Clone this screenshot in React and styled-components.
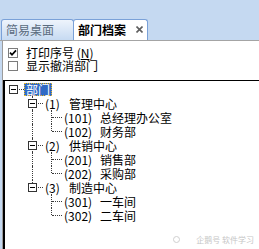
import styled, { createGlobalStyle } from "styled-components";

const GlobalStyle = createGlobalStyle`
  html, body { margin: 0; padding: 0; background: #fff; }
  body {
    font-family: "Noto Sans CJK SC", "Noto Sans", sans-serif;
    font-size: 12px;
    color: #000;
  }
`;

const departments = [
  {
    name: "部门",
    selected: true,
    children: [
      {
        code: "(1)",
        name: "管理中心",
        children: [
          { code: "(101)", name: "总经理办公室" },
          { code: "(102)", name: "财务部" },
        ],
      },
      {
        code: "(2)",
        name: "供销中心",
        children: [
          { code: "(201)", name: "销售部" },
          { code: "(202)", name: "采购部" },
        ],
      },
      {
        code: "(3)",
        name: "制造中心",
        children: [
          { code: "(301)", name: "一车间" },
          { code: "(302)", name: "二车间" },
        ],
      },
    ],
  },
];

// turn the nested tree into rows, keeping which ancestor columns still need a line
const flatten = (nodes, depth = 0, trail = [], out = []) => {
  nodes.forEach((node, i) => {
    const last = i === nodes.length - 1;
    out.push({ ...node, depth, trail, last, first: i === 0 });
    if (node.children) flatten(node.children, depth + 1, [...trail, !last], out);
  });
  return out;
};

const App = () => {
  const rows = flatten(departments);

  return (
    <Window>
      <GlobalStyle />
      <TabBar>
        <Tab>简易桌面</Tab>
        <Tab $active>
          部门档案
          <Close width="7" height="7" viewBox="0 0 7 7">
            <path d="M0.5 0.5 L6.5 6.5 M6.5 0.5 L0.5 6.5" stroke="#5f5f5f" strokeWidth="1.6" />
          </Close>
        </Tab>
      </TabBar>

      <Body>
        <Options>
          <CheckRow>
            <CheckBox>
              <svg width="8" height="8" viewBox="0 0 8 8">
                <path d="M1 3.6 L3 5.8 L7 1.4" fill="none" stroke="#000" strokeWidth="1.7" />
              </svg>
            </CheckBox>
            <span>打印序号 (<u>N</u>)</span>
          </CheckRow>
          <CheckRow>
            <CheckBox />
            <span>显示撤消部门</span>
          </CheckRow>
        </Options>

        <TreePanel>
          {rows.map((row, idx) => (
            <Row key={idx}>
              {row.trail.map((more, k) => (
                <Guide key={k} $line={more} />
              ))}
              <Branch $top={row.depth > 0 || !row.first} $bottom={!row.last}>
                {row.children && <Expander />}
              </Branch>
              <Label $selected={row.selected}>
                {row.code && <Code $chars={row.code.length}>{row.code}</Code>}
                {row.name}
              </Label>
            </Row>
          ))}
        </TreePanel>
      </Body>

      <Watermark>
        <Ring />
        企鹅号 软件学习
      </Watermark>
    </Window>
  );
};

export default App;

const Window = styled.div`
  position: relative;
  width: 259px;
  height: 249px;
  overflow: hidden;
  display: flex;
  flex-direction: column;
  background: #fff;
`;

const TabBar = styled.div`
  flex: none;
  height: 40px;
  display: flex;
  align-items: flex-end;
  padding-left: 1px;
  background: #c5d9f1;
  border-bottom: 1px solid #a4a4a4;
`;

const Tab = styled.div`
  box-sizing: border-box;
  height: 21px;
  width: ${(p) => (p.$active ? 75 : 73)}px;
  margin-left: ${(p) => (p.$active ? -1 : 0)}px;
  padding: 0 0 2px 4px;
  display: flex;
  align-items: center;
  border: 1px solid #7aa1d8;
  border-bottom: none;
  border-radius: 3px 3px 0 0;
  background: ${(p) => (p.$active ? "#fff" : "linear-gradient(#eef4fc, #c6daf2)")};
  color: ${(p) => (p.$active ? "#000" : "#5b6c80")};
  font-weight: ${(p) => (p.$active ? 700 : 400)};
  font-size: 12px;
  white-space: nowrap;
`;

const Close = styled.svg`
  margin-left: 10px;
  flex: none;
`;

const Body = styled.div`
  flex: 1;
  display: flex;
  flex-direction: column;
  border-left: 2px solid #c5d9f1;
  box-shadow: inset 1px 0 #9c9c9c;
`;

const Options = styled.div`
  display: flex;
  flex-direction: column;
  padding: 5px 0 0 6px;
`;

const CheckRow = styled.label`
  height: 13px;
  display: flex;
  align-items: center;
  gap: 8px;
  font-size: 12px;
  line-height: 13px;
  white-space: nowrap;
`;

const CheckBox = styled.span`
  box-sizing: border-box;
  width: 10px;
  height: 10px;
  flex: none;
  display: flex;
  align-items: center;
  justify-content: center;
  border: 1px solid #7c7c7c;
  background: #fff;
`;

const TreePanel = styled.div`
  flex: 1;
  margin: 8px 0 0 1px;
  padding-top: 1px;
  border-top: 1px solid #000;
  border-left: 2px solid #000;
`;

const Row = styled.div`
  height: 14px;
  display: flex;
  align-items: center;
`;

const Guide = styled.span`
  position: relative;
  flex: none;
  width: 19px;
  align-self: stretch;

  &::before {
    content: "";
    display: ${(p) => (p.$line ? "block" : "none")};
    position: absolute;
    left: 8px;
    top: 0;
    bottom: 0;
    border-left: 1px dotted #3a3a3a;
  }
`;

const Branch = styled.span`
  position: relative;
  flex: none;
  width: 19px;
  align-self: stretch;

  &::before {
    content: "";
    display: ${(p) => (p.$top || p.$bottom ? "block" : "none")};
    position: absolute;
    left: 8px;
    top: ${(p) => (p.$top ? "0" : "7px")};
    bottom: ${(p) => (p.$bottom ? "0" : "7px")};
    border-left: 1px dotted #3a3a3a;
  }

  &::after {
    content: "";
    position: absolute;
    left: 9px;
    right: 0;
    top: 7px;
    border-top: 1px dotted #3a3a3a;
  }
`;

const Expander = styled.span`
  position: absolute;
  z-index: 1;
  left: 4px;
  top: 3px;
  box-sizing: border-box;
  width: 9px;
  height: 9px;
  border: 1px solid #333;
  background: #fff;

  &::after {
    content: "";
    position: absolute;
    left: 1px;
    right: 1px;
    top: 3px;
    height: 1px;
    background: #000;
  }
`;

const Label = styled.span`
  box-sizing: border-box;
  height: 13px;
  padding: 0 1px;
  line-height: 11px;
  font-size: 12px;
  white-space: nowrap;
  border: 1px dotted ${(p) => (p.$selected ? "#e9b820" : "transparent")};
  background: ${(p) => (p.$selected ? "#316ac5" : "transparent")};
  color: ${(p) => (p.$selected ? "#fff" : "#000")};
`;

const Code = styled.span`
  display: inline-block;
  width: ${(p) => (p.$chars + 1) * 6}px;
`;

const Watermark = styled.div`
  position: absolute;
  right: 5px;
  bottom: 5px;
  display: flex;
  align-items: center;
  gap: 3px;
  font-size: 8px;
  line-height: 9px;
  color: #c6c6c6;
  white-space: nowrap;
`;

const Ring = styled.span`
  width: 5px;
  height: 5px;
  margin-right: 13px;
  border: 1px solid #cfcfcf;
  border-radius: 50%;
`;
